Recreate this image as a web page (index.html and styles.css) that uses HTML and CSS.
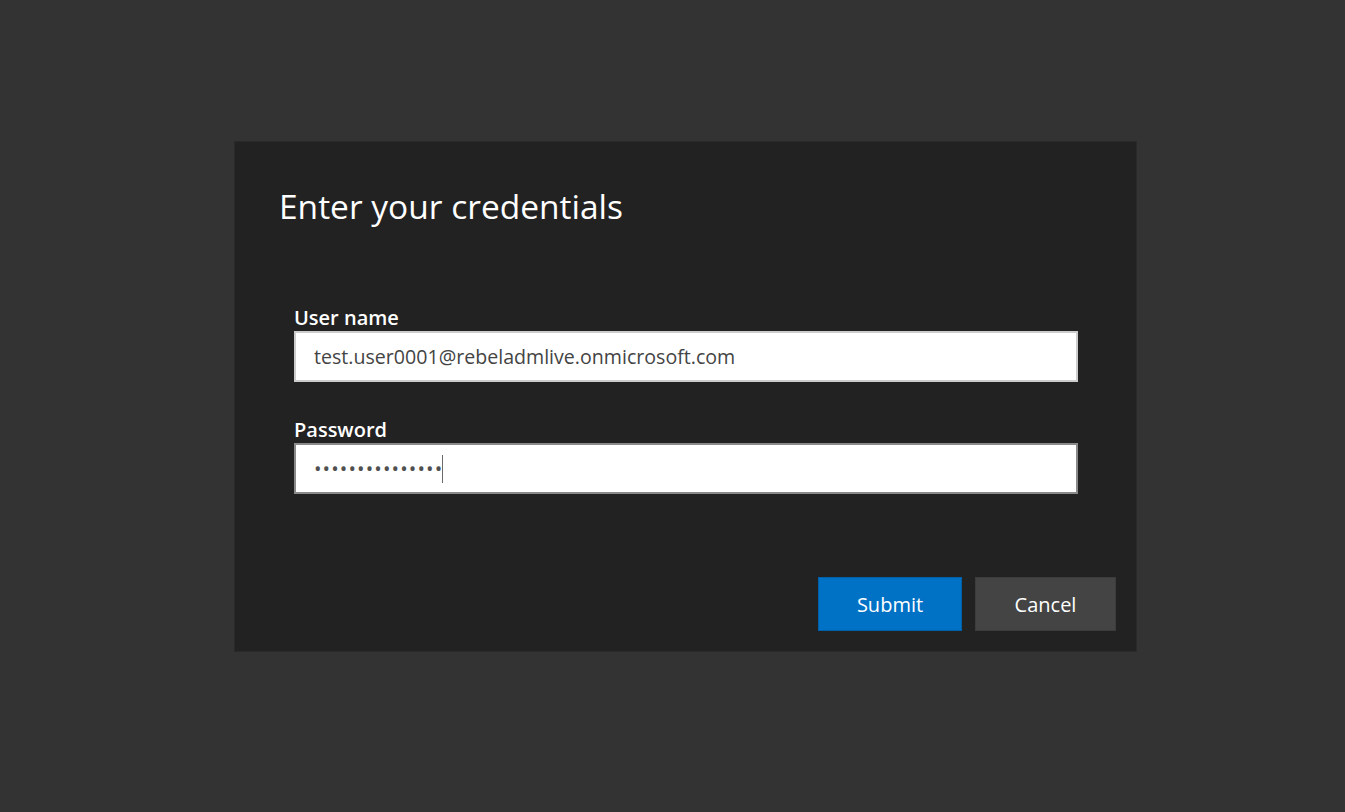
FILE: index.html
```html
<!DOCTYPE html>
<html lang="en">
<head>
    <meta charset="UTF-8">
    <meta name="viewport" content="width=device-width, initial-scale=1.0">
    <title>Enter your credentials</title>
    <link rel="stylesheet" href="styles.css">
</head>
<body>
    <main class="dialog">
        <h1 class="dialog__title">Enter your credentials</h1>

        <form class="dialog__form">
            <div class="field">
                <label class="field__label" for="username">User name</label>
                <input
                    id="username"
                    class="field__input"
                    type="text"
                    value="test.user0001@rebeladmlive.onmicrosoft.com">
            </div>
            <div class="field">
                <label class="field__label">Password</label>
                <div class="field__input field__input--focused">
                    <span class="field__dots">&bull;&bull;&bull;&bull;&bull;&bull;&bull;&bull;&bull;&bull;&bull;&bull;&bull;&bull;&bull;</span><span class="field__caret"></span>
                </div>
            </div>
        </form>

        <div class="dialog__actions">
            <button class="btn btn--primary" type="button">Submit</button>
            <button class="btn" type="button">Cancel</button>
        </div>
    </main>
</body>
</html>
```

FILE: styles.css
```css
body {
    margin: 0;
    min-height: 100vh;
    background: #333333;

    font-family: "Open Sans", "Noto Sans", sans-serif;

    padding: 141px 0 0 234px;
    box-sizing: border-box;
}

.dialog {
    width: 903px;
    height: 511px;

    box-sizing: border-box;
    padding: 44px 20px 20px 44px;

    background: #222222;
    border: 1px solid #2a2a2a;

    display: flex;
    flex-direction: column;
}

.dialog__title {
    margin: 0;

    font-size: 33.5px;
    font-weight: 400;
    line-height: 40px;

    color: #FFFFFF;
}

.dialog__form {
    margin: 81px 38px 0 15px;
}

.field {
    margin-bottom: 37px;
}

.field__label {
    display: block;
    padding-bottom: 2px;

    font-size: 20px;
    font-weight: 600;
    line-height: 22px;

    color: #FFFFFF;
}

.field__input {
    display: flex;
    align-items: center;

    width: 100%;
    height: 51px;
    box-sizing: border-box;
    margin: 0;
    padding: 0 18px;

    background: #FFFFFF;
    border: 2px solid #CCCCCC;
    outline: none;

    font-family: inherit;
    font-size: 19.6px;

    color: #444444;
}

.field__input--focused {
    border-color: #8A8A8A;
}

.field__dots {
    font-size: 20px;
    letter-spacing: 1.1px;
    color: #505050;
}

.field__caret {
    width: 1px;
    height: 28px;
    margin-left: -1px;
    background: #6a6a6a;
}

.dialog__actions {
    margin-top: auto;

    display: flex;
    justify-content: flex-end;
    gap: 13px;
}

.btn {
    width: 141px;
    height: 54px;
    margin: 0;
    padding: 0;

    background: #444444;
    border: 1px solid #3c3c3c;

    font-family: inherit;
    font-size: 20px;

    color: #FFFFFF;

    cursor: pointer;
}

.btn--primary {
    width: 144px;
    background: #0072C6;
    border-color: #005FA6;
}
```
